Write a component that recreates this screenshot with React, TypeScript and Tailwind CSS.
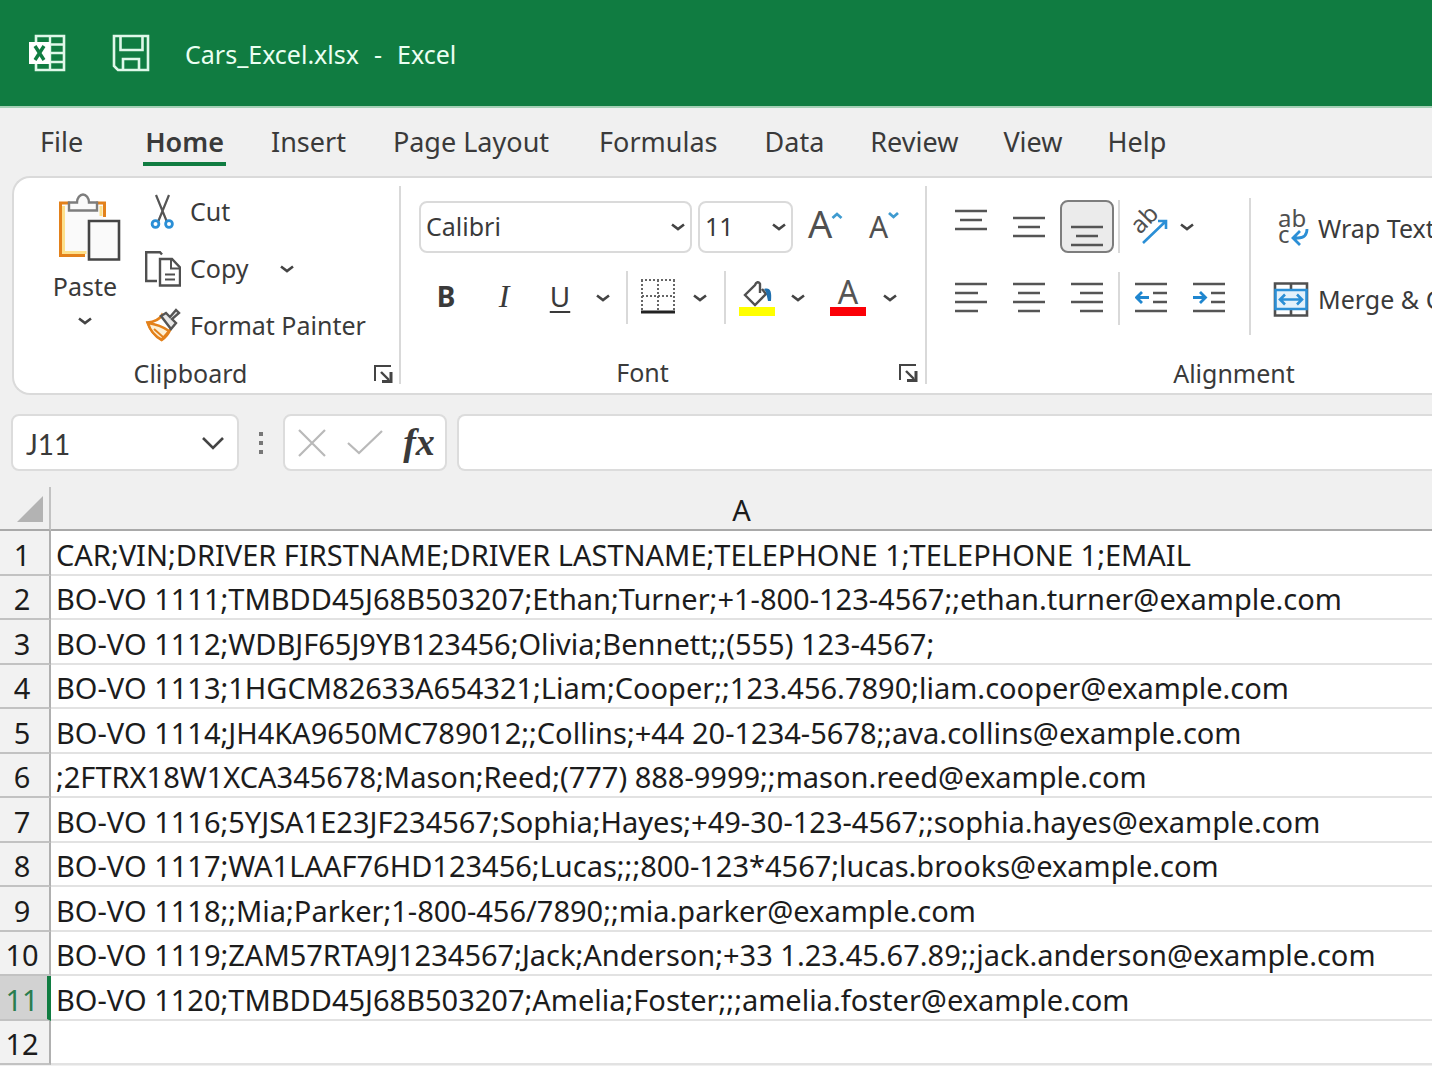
import { useState } from "react";
import type { ReactNode } from "react";

const TABS = [
  { name: "File", className: "mr-[15px]" },
  { name: "Home", className: "px-[2px]" },
  { name: "Insert", className: "mr-[2px]" },
  { name: "Page Layout", className: "mr-[5px]" },
  { name: "Formulas", className: "mr-[2px]" },
  { name: "Data", className: "mr-[1px]" },
  { name: "Review", className: "" },
  { name: "View", className: "" },
  { name: "Help", className: "" },
];

const ROWS = [
  "CAR;VIN;DRIVER FIRSTNAME;DRIVER LASTNAME;TELEPHONE 1;TELEPHONE 1;EMAIL",
  "BO-VO 1111;TMBDD45J68B503207;Ethan;Turner;+1-800-123-4567;;ethan.turner@example.com",
  "BO-VO 1112;WDBJF65J9YB123456;Olivia;Bennett;;(555) 123-4567;",
  "BO-VO 1113;1HGCM82633A654321;Liam;Cooper;;123.456.7890;liam.cooper@example.com",
  "BO-VO 1114;JH4KA9650MC789012;;Collins;+44 20-1234-5678;;ava.collins@example.com",
  ";2FTRX18W1XCA345678;Mason;Reed;(777) 888-9999;;mason.reed@example.com",
  "BO-VO 1116;5YJSA1E23JF234567;Sophia;Hayes;+49-30-123-4567;;sophia.hayes@example.com",
  "BO-VO 1117;WA1LAAF76HD123456;Lucas;;;800-123*4567;lucas.brooks@example.com",
  "BO-VO 1118;;Mia;Parker;1-800-456/7890;;mia.parker@example.com",
  "BO-VO 1119;ZAM57RTA9J1234567;Jack;Anderson;+33 1.23.45.67.89;;jack.anderson@example.com",
  "BO-VO 1120;TMBDD45J68B503207;Amelia;Foster;;;amelia.foster@example.com",
  "",
];

function Chevron({ className = "" }: { className?: string }) {
  return (
    <svg width="14" height="8" viewBox="0 0 14 8" fill="none" className={className}>
      <path d="M1 1.5 7 6l6-4.5" stroke="#444" strokeWidth="2.6" />
    </svg>
  );
}

function ExcelLogo() {
  return (
    <svg width="38" height="38" viewBox="0 0 38 38" fill="none">
      <path d="M8 8V2h28v34H8v-6" stroke="#dff8e9" strokeWidth="2.6" />
      <path d="M22 1v36M8 10.5h29M22 19h15M8 28h29" stroke="#dff8e9" strokeWidth="2.4" />
      <rect x="1" y="8" width="21" height="22" fill="#fff" />
      <path d="m7 12 9 14M16 12 7 26" stroke="#107c41" strokeWidth="3.4" />
    </svg>
  );
}

function SaveIcon() {
  return (
    <svg width="38" height="38" viewBox="0 0 38 38" fill="none" stroke="#dff8e9" strokeWidth="2.6">
      <path d="M2 2h34v34H6l-4-4z" />
      <path d="M8.5 2v14h22V2M11 36V25h16v11" />
    </svg>
  );
}

function PasteIcon() {
  return (
    <svg width="64" height="70" viewBox="0 0 64 70" fill="none">
      <path d="M3.5 12h43v53h-43z" fill="#fafafa" />
      <path d="M6.5 14v46.5h23M44 14v10" stroke="#fde08c" strokeWidth="3" />
      <path d="M13 11H3.5v52.5H28M39 11h8.5v14" stroke="#e3811b" strokeWidth="3" />
      <path d="M12 18.5v-8h8c0-4.500 3-8 6-8s6 3.500 6 8h8v8z" fill="#fafafa" stroke="#7d7d7d" strokeWidth="2.4" />
      <path d="M32 29h30v38.500H32z" fill="#fafafa" stroke="#444" strokeWidth="2.6" />
    </svg>
  );
}

function CutIcon() {
  return (
    <svg width="36" height="36" viewBox="0 0 36 36" fill="none">
      <path d="m11 1 11 27M24 1 13 28" stroke="#555" strokeWidth="2.2" />
      <circle cx="10.5" cy="30" r="3.4" stroke="#2b8fd6" strokeWidth="2.8" />
      <circle cx="24" cy="30" r="3.4" stroke="#2b8fd6" strokeWidth="2.8" />
    </svg>
  );
}

function CopyIcon() {
  return (
    <svg width="36" height="36" viewBox="0 0 36 36" fill="none" stroke="#505050" strokeWidth="2.4">
      <path d="M17 3.500 15 1.200H1.200V30H12" />
      <path d="M15 8h12l8 8.500v18H15z" fill="#fff" />
      <path d="M26 8v9.500h9M20 23.500h10M20 28.500h10" strokeWidth="2" />
    </svg>
  );
}

function PainterIcon() {
  return (
    <svg width="36" height="36" viewBox="0 0 36 36" fill="none">
      <path d="M17 7c-3 5-8 7-14.500 7.500C5 22 10 28 16.500 32 20 30 23.500 26 26 20z" fill="#fff" stroke="#e3811b" strokeWidth="2.6" />
      <path d="M3 15c7 1 14 3 21 8-2 3-5 6-7.500 8.500C10 28 5 22 3 15z" fill="#fdf0d5" stroke="#e3811b" strokeWidth="2.4" />
      <path d="m9 21 9 8" stroke="#e3811b" strokeWidth="2" />
      <path d="m16 8 5-3 4 4 6-7 3 3-7 6 4 4-5 6z" fill="#e8e8e8" stroke="#555" strokeWidth="2.4" />
    </svg>
  );
}

function LauncherIcon() {
  return (
    <svg width="20" height="20" viewBox="0 0 20 20" fill="none" stroke="#444" strokeWidth="2">
      <path d="M2 17V2h16" />
      <path d="m8 8 8 8" strokeWidth="2.4" />
      <path d="M18 8v9.500H9" strokeWidth="3" />
    </svg>
  );
}

function GrowFontIcon() {
  return (
    <svg width="36" height="52" viewBox="0 0 36 52" fill="none" className="overflow-visible">
      <text x="0" y="37" fontSize="38" fill="#505050" fontFamily="Noto Sans, sans-serif">A</text>
      <path d="m24.500 17 4.500-4 4.500 4" stroke="#3f9bd0" strokeWidth="2.8" />
    </svg>
  );
}

function ShrinkFontIcon() {
  return (
    <svg width="36" height="52" viewBox="0 0 36 52" fill="none" className="overflow-visible">
      <text x="2" y="37" fontSize="30" fill="#505050" fontFamily="Noto Sans, sans-serif">A</text>
      <path d="m22 12 4.500 4 4.500-4" stroke="#3f9bd0" strokeWidth="2.8" />
    </svg>
  );
}

function BordersIcon() {
  return (
    <svg width="36" height="36" viewBox="0 0 36 36" fill="none" stroke="#666" strokeWidth="2">
      <path d="M1 2h34M2 2v30M34 2v30M18 2v30M2 18h32" strokeDasharray="2 2" />
      <path d="M1 34h34" stroke="#222" strokeWidth="3" />
    </svg>
  );
}

function FillIcon() {
  return (
    <svg width="36" height="38" viewBox="0 0 36 38" fill="none">
      <path d="M21 14V5c-1-3-4-2-5 1L6 16l10 10 11-11-4-5" stroke="#505050" strokeWidth="2.4" />
      <path d="M25 10c6-2 8 2 7 12h-3l-2-9z" fill="#1f6fae" />
      <path d="M0 28h36v9H0z" fill="#ff0" />
    </svg>
  );
}

function FontColorIcon() {
  return (
    <svg width="36" height="38" viewBox="0 0 36 38" className="overflow-visible">
      <text x="18" y="25" fontSize="32" textAnchor="middle" fill="#555" fontFamily="Noto Sans, sans-serif">A</text>
      <path d="M0 28h36v9H0z" fill="#fb0007" />
    </svg>
  );
}

function LinesIcon({ d }: { d: string }) {
  return (
    <svg width="32" height="40" viewBox="0 0 32 40" fill="none">
      <path d={d} stroke="#555" strokeWidth="2.4" />
    </svg>
  );
}

function IndentIcon({ out = false }: { out?: boolean }) {
  return (
    <svg width="32" height="40" viewBox="0 0 32 40" fill="none">
      <path d="M0 5h32M18 14h14M18 23h14M0 32h32" stroke="#555" strokeWidth="2.4" />
      <path
        d={out ? "M14 18.500H2M7 13l-5.500 5.500L7 24" : "M0 18.500h12M7 13l5.500 5.500L7 24"}
        stroke="#1f86cf"
        strokeWidth="2.8"
      />
    </svg>
  );
}

function OrientationIcon() {
  return (
    <svg width="38" height="38" viewBox="0 0 38 38" fill="none" className="overflow-visible">
      <text x="9" y="27" fontSize="24" fill="#505050" fontFamily="Noto Sans, sans-serif" transform="rotate(-45 9 27)">ab</text>
      <path d="m12 35 23-22M27 13h8v8" stroke="#2b8fd6" strokeWidth="2.6" />
    </svg>
  );
}

function WrapIcon() {
  return (
    <svg width="36" height="38" viewBox="0 0 36 38" fill="none" className="overflow-visible">
      <text x="5" y="17" fontSize="24" fill="#505050" fontFamily="Noto Sans, sans-serif">ab</text>
      <text x="5" y="33" fontSize="24" fill="#505050" fontFamily="Noto Sans, sans-serif">c</text>
      <path d="M34 19c0 6-3 9-9 9h-5M27 21l-7 7 7 7" stroke="#2b8fd6" strokeWidth="2.8" />
    </svg>
  );
}

function MergeIcon() {
  return (
    <svg width="36" height="36" viewBox="0 0 36 36" fill="none">
      <path d="M2 1.500h32v32H2zM18 2v7M18 27v6" stroke="#505050" strokeWidth="2.6" />
      <path d="M2.500 8h31v19h-31z" fill="#e3f1fb" stroke="#2b8fd6" strokeWidth="2.6" />
      <path d="M7 17.500h22M12 12.500l-5 5 5 5M24 12.500l5 5-5 5" stroke="#2b8fd6" strokeWidth="2.6" />
    </svg>
  );
}

function IconButton({ label, className, children }: { label: string; className: string; children: ReactNode }) {
  return (
    <button type="button" aria-label={label} className={`flex shrink-0 items-center justify-center ${className}`}>
      {children}
    </button>
  );
}

function Separator({ className = "" }: { className?: string }) {
  return <div className={`w-[2px] shrink-0 bg-[#d9d9d9] ${className}`} />;
}

function Dropdown({ label, options, className }: { label: string; options: string[]; className: string }) {
  return (
    <div className={`grid h-[52px] shrink-0 items-center ${className}`}>
      <select
        aria-label={label}
        className="col-start-1 row-start-1 h-full w-full appearance-none rounded-lg border-2 border-[#dadada] bg-white pl-[5px] outline-none"
      >
        {options.map((o) => (
          <option key={o}>{o}</option>
        ))}
      </select>
      <Chevron className="pointer-events-none col-start-1 row-start-1 mr-[7px] justify-self-end" />
    </div>
  );
}

function ClipboardGroup() {
  return (
    <section className="flex w-[385px] shrink-0 flex-col">
      <div className="flex h-[176px]">
        <button type="button" className="ml-[34px] flex w-[74px] flex-col items-center pt-[14px] leading-8">
          <span className="pl-[8px]"><PasteIcon /></span>
          <span className="mt-[8px]">Paste</span>
          <Chevron className="mt-[15px]" />
        </button>
        <div className="ml-[23px] flex flex-col pt-[5px] [&>div]:h-[58px]">
          <div className="flex items-center">
            <button type="button" className="flex items-center gap-[9px]"><CutIcon />Cut</button>
          </div>
          <div className="flex items-center">
            <button type="button" className="flex items-center gap-[9px]"><CopyIcon />Copy</button>
            <IconButton label="Copy options" className="ml-[22px] h-8 w-8"><Chevron /></IconButton>
          </div>
          <div className="flex items-center">
            <button type="button" className="flex items-center gap-[9px] whitespace-nowrap"><PainterIcon />Format Painter</button>
          </div>
        </div>
      </div>
      <div className="flex h-[40px] items-center">
        <h2 className="flex-1 pr-[6px] text-center">Clipboard</h2>
        <IconButton label="Clipboard settings" className="mr-[6px] size-[20px]"><LauncherIcon /></IconButton>
      </div>
    </section>
  );
}

function FontGroup() {
  return (
    <section className="flex w-[524px] shrink-0 flex-col">
      <div className="flex h-[176px] flex-col gap-[18px] pt-[23px]">
        <div className="flex items-center pl-[18px]">
          <Dropdown label="Font" options={["Calibri", "Arial"]} className="w-[273px]" />
          <Dropdown label="Font size" options={["11", "12", "14"]} className="ml-[6px] w-[95px]" />
          <IconButton label="Increase font size" className="ml-[15px] h-[52px] w-[36px]"><GrowFontIcon /></IconButton>
          <IconButton label="Decrease font size" className="ml-[23px] h-[52px] w-[36px]"><ShrinkFontIcon /></IconButton>
        </div>
        <div className="flex h-[53px] items-center pl-[16px]">
          <IconButton label="Bold" className="h-full w-[58px] pb-[4px] text-[28px]"><b>B</b></IconButton>
          <IconButton label="Italic" className="h-full w-[58px] pb-[4px] text-[32px]">
            <i className="font-['Liberation_Serif',serif]">I</i>
          </IconButton>
          <IconButton label="Underline" className="h-full w-[54px] pb-[4px] text-[28px]">
            <u className="decoration-2 underline-offset-4">U</u>
          </IconButton>
          <IconButton label="Underline options" className="h-full w-[32px]"><Chevron /></IconButton>
          <Separator className="ml-[7px] h-full" />
          <IconButton label="Borders" className="ml-[12px] h-full w-[36px] pb-[3px]"><BordersIcon /></IconButton>
          <IconButton label="Border options" className="ml-[8px] h-full w-[32px]"><Chevron /></IconButton>
          <Separator className="ml-[8px] h-full" />
          <IconButton label="Fill color" className="ml-[13px] h-full w-[36px]"><FillIcon /></IconButton>
          <IconButton label="Fill options" className="ml-[7px] h-full w-[32px]"><Chevron /></IconButton>
          <IconButton label="Font color" className="ml-[16px] h-full w-[36px]"><FontColorIcon /></IconButton>
          <IconButton label="Font color options" className="ml-[8px] h-full w-[32px]"><Chevron /></IconButton>
        </div>
      </div>
      <div className="flex h-[40px] items-center">
        <h2 className="flex-1 pr-[14px] text-center">Font</h2>
        <IconButton label="Font settings" className="mr-[7px] size-[20px]"><LauncherIcon /></IconButton>
      </div>
    </section>
  );
}

function AlignmentGroup() {
  return (
    <section className="flex w-[614px] shrink-0 flex-col">
      <div className="flex h-[176px] pl-[17px]">
        <div className="flex flex-col gap-[19px] pt-[22px]">
          <div className="flex h-[53px] items-center gap-[4px]">
            <IconButton label="Top align" className="h-full w-[54px]"><LinesIcon d="M0 4h32M5 13h22M0 22h32" /></IconButton>
            <IconButton label="Middle align" className="h-full w-[54px]"><LinesIcon d="M0 11h32M5 20h22M0 29h32" /></IconButton>
            <IconButton label="Bottom align" className="h-full w-[54px] rounded-lg border-2 border-[#7d7d7d] bg-[#ebebeb]">
              <LinesIcon d="M0 20h32M5 29h22M0 38h32" />
            </IconButton>
            <Separator className="h-full" />
            <IconButton label="Orientation" className="ml-[7px] h-full w-[38px]"><OrientationIcon /></IconButton>
            <IconButton label="Orientation options" className="h-full w-[28px]"><Chevron /></IconButton>
          </div>
          <div className="flex h-[53px] items-center gap-[4px]">
            <IconButton label="Align left" className="h-full w-[54px]"><LinesIcon d="M0 5h32M0 14h23M0 23h32M0 32h23" /></IconButton>
            <IconButton label="Center" className="h-full w-[54px]"><LinesIcon d="M0 5h32M5 14h22M0 23h32M5 32h22" /></IconButton>
            <IconButton label="Align right" className="h-full w-[54px]"><LinesIcon d="M0 5h32M9 14h23M0 23h32M9 32h23" /></IconButton>
            <Separator className="h-full" />
            <IconButton label="Decrease indent" className="h-full w-[54px]"><IndentIcon out /></IconButton>
            <IconButton label="Increase indent" className="h-full w-[54px]"><IndentIcon /></IconButton>
          </div>
        </div>
        <Separator className="mt-[20px] ml-[13px] h-[137px]" />
        <div className="ml-[22px] flex flex-col gap-[18px] pt-[24px] whitespace-nowrap">
          <button type="button" className="flex h-[53px] items-center gap-[9px]"><WrapIcon />Wrap Text</button>
          <button type="button" className="flex h-[53px] items-center gap-[9px]"><MergeIcon />Merge &amp; Center</button>
        </div>
      </div>
      <h2 className="h-[40px] text-center leading-[40px]">Alignment</h2>
    </section>
  );
}

function FormulaBar() {
  return (
    <div className="flex h-[57px] pl-[11px]">
      <div className="flex w-[228px] shrink-0 items-center rounded-lg border-2 border-[#dcdcdc] bg-white">
        <input
          aria-label="Name box"
          defaultValue="J11"
          className="w-full min-w-0 flex-1 pt-[2px] pl-[13px] font-[Lato,sans-serif] text-[28px] outline-none"
        />
        <IconButton label="Name box options" className="h-full w-[48px]">
          <svg width="24" height="14" viewBox="0 0 24 14" fill="none">
            <path d="m2 2 10 10L22 2" stroke="#444" strokeWidth="2.6" />
          </svg>
        </IconButton>
      </div>
      <svg width="44" height="57" viewBox="0 0 44 57" fill="#777" className="shrink-0">
        <path d="M20 18h4v4h-4zM20 27h4v4h-4zM20 36h4v4h-4z" />
      </svg>
      <div className="flex w-[164px] shrink-0 items-center rounded-lg border-2 border-[#dcdcdc] bg-white">
        <IconButton label="Cancel" className="ml-[12px] w-[30px]">
          <svg width="28" height="28" viewBox="0 0 28 28" fill="none">
            <path d="m1 1 26 26M27 1 1 27" stroke="#b9b9b9" strokeWidth="2.2" />
          </svg>
        </IconButton>
        <IconButton label="Enter" className="ml-[19px] w-[38px]">
          <svg width="38" height="28" viewBox="0 0 38 28" fill="none">
            <path d="m2 14 11 10L36 2" stroke="#b9b9b9" strokeWidth="2.2" />
          </svg>
        </IconButton>
        <IconButton label="Insert function" className="ml-[17px] w-[36px] pb-[2px] font-['Liberation_Serif',serif] text-[38px] leading-10 font-bold italic">
          fx
        </IconButton>
      </div>
      <input
        aria-label="Formula"
        className="ml-[10px] min-w-0 flex-1 rounded-l-lg border-2 border-r-0 border-[#dcdcdc] bg-white px-3 outline-none"
      />
    </div>
  );
}

function Sheet({ selectedRow }: { selectedRow: number }) {
  return (
    <table className="w-full table-fixed border-separate border-spacing-0 text-[29px] leading-8 text-[#1c1c1c]">
      <colgroup>
        <col className="w-[51px]" />
        <col />
      </colgroup>
      <thead>
        <tr className="h-[44px]">
          <th className="border-r-2 border-b-2 border-[#a9a9a9] border-r-[#c2c2c2] p-0" aria-label="Select all">
            <svg width="49" height="42" viewBox="0 0 49 42">
              <path d="M43 9v26H17z" fill="#b3b3b3" />
            </svg>
          </th>
          <th scope="col" className="border-b-2 border-[#a9a9a9] p-0 pt-[4px] font-normal">A</th>
        </tr>
      </thead>
      <tbody>
        {ROWS.map((text, i) => {
          const n = i + 1;
          return (
            <tr key={n} className="h-[45px] even:h-[44px]">
              <th
                scope="row"
                className={
                  n === selectedRow
                    ? "border-r-4 border-b-2 border-r-[#107c41] border-b-[#c2c2c2] bg-[#d2d2d2] p-0 pt-[4px] pr-[3px] font-normal text-[#2a7d4f]"
                    : "border-r-2 border-b-2 border-r-[#b0b0b0] border-b-[#c2c2c2] bg-[#f2f2f2] p-0 pt-[4px] pr-[5px] font-normal"
                }
              >
                {n}
              </th>
              <td className="overflow-hidden border-b-2 border-[#e2e2e2] bg-white p-0 pt-[4px] pl-[5px] whitespace-nowrap">
                {text}
              </td>
            </tr>
          );
        })}
      </tbody>
    </table>
  );
}

export default function App() {
  const [activeTab, setActiveTab] = useState("Home");

  return (
    <div className="min-h-screen overflow-hidden bg-[#f0f0f0] font-['Noto_Sans',sans-serif] text-[25px] text-[#3a3a3a]">
      <header className="flex h-[108px] items-center border-b-2 border-[#a5d0b6] bg-[#107c41] pl-[28px] text-[#eafff2]">
        <ExcelLogo />
        <button type="button" aria-label="Save" className="ml-[46px]"><SaveIcon /></button>
        <h1 className="ml-[35px] flex gap-[15px] pt-[4px] whitespace-nowrap">
          <span>Cars_Excel.xlsx</span>
          <span>-</span>
          <span>Excel</span>
        </h1>
      </header>

      <nav className="flex h-[68px] items-start gap-[45px] pt-[16px] pl-[40px] text-[27px]">
        {TABS.map((tab) => (
          <button
            key={tab.name}
            type="button"
            onClick={() => setActiveTab(tab.name)}
            className={`border-b-4 pb-[2px] leading-9 whitespace-nowrap ${tab.className} ${
              tab.name === activeTab ? "border-[#107c41] font-semibold" : "border-transparent"
            }`}
          >
            {tab.name}
          </button>
        ))}
      </nav>

      <div className="ml-[12px] flex h-[219px] overflow-hidden rounded-l-[18px] border-2 border-r-0 border-[#dadada] bg-white">
        <ClipboardGroup />
        <Separator className="mt-[8px] h-[198px]" />
        <FontGroup />
        <Separator className="mt-[8px] h-[198px]" />
        <AlignmentGroup />
      </div>

      <div className="pt-[19px] pb-[16px]">
        <FormulaBar />
      </div>

      <Sheet selectedRow={11} />
    </div>
  );
}
